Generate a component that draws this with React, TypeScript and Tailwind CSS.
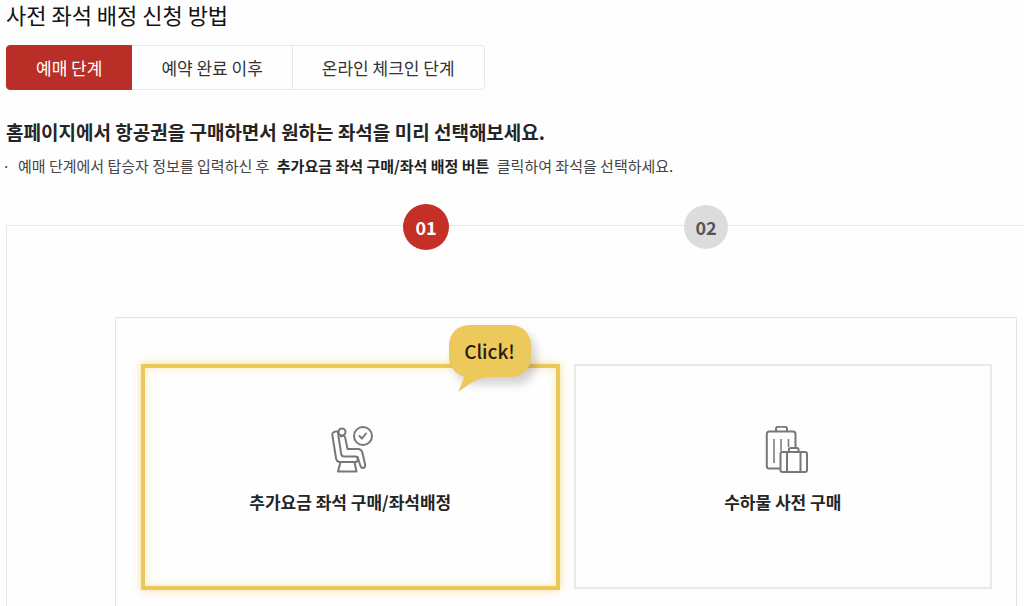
import { useState } from 'react'
import clsx from 'clsx'

const tabs = ['예매 단계', '예약 완료 이후', '온라인 체크인 단계']

function SeatIcon() {
  return (
    <svg width="47" height="50" viewBox="-3 0 47 50" fill="none" stroke="#777" strokeWidth="2" strokeLinecap="round" strokeLinejoin="round" aria-hidden="true">
      <circle cx="12" cy="6" r="3.5" />
      <path d="M8.5 5.500H6C3 5.500 2 7.500 2.400 9.500L6 32C6.500 35 8 36 10 36H25.500C28.500 36 28.500 30.500 25.500 30.500H14C12.500 30.500 11.500 29.500 11.200 28L8 7" />
      <path d="M11 10.500C13 9 15 10 15.300 12L17.500 23H28C30.500 23 31.500 24 32.200 26L35 38C36 42 32 43.500 30.500 40L27.500 31" />
      <path d="M10.500 36L8 45.500H26.500L24.500 36" />
      <circle cx="33" cy="10" r="9" />
      <path d="M29.500 10L32 12.500L36 7.500" />
    </svg>
  )
}

function LuggageIcon() {
  return (
    <svg width="50" height="50" viewBox="-7 1 50 50" fill="none" stroke="#777" strokeWidth="2" strokeLinejoin="round" aria-hidden="true">
      <path d="M11 6.500V4C11 2.500 12 1.800 13 1.800H20C21 1.800 22 2.500 22 4V6.500" />
      <path d="M15 43.500H4C2.500 43.500 1.800 42.500 1.800 41V9C1.800 7.500 2.500 6.500 4 6.500H28C29.500 6.500 30.500 7.500 30.500 9V23" />
      <path d="M9 14V38M16 14V26M23.500 14V22" strokeWidth="1.500" />
      <path d="M24 26.500V24.500C24 23.500 24.500 23 25.500 23H32C33 23 33.500 23.500 33.500 24.500V26.500" />
      <rect x="15.500" y="27" width="26.500" height="20" rx="2" />
      <path d="M22 27V47M35.500 27V47" />
    </svg>
  )
}

function ClickBubble() {
  return (
    <div className="absolute -top-[43px] right-[25px] flex h-13 w-[82px] items-center justify-center rounded-[20px] bg-[#edc85a] text-[19px] font-medium text-[#251b12] shadow-[5px_7px_10px_#0000002e]">
      <svg className="absolute top-12 left-2" width="36" height="20" viewBox="0 0 36 20" aria-hidden="true">
        <path d="M9 0L1 19L14 10Q22 5 32 4V0Z" fill="#edc85a" />
      </svg>
      <span>Click!</span>
    </div>
  )
}

export default function App() {
  const [activeTab, setActiveTab] = useState(0)
  const [step, setStep] = useState(0)

  return (
    <main className="flex min-h-screen flex-col overflow-hidden bg-[#fefefe] pl-1.5 font-['Noto_Sans_CJK_KR','Noto_Sans',sans-serif] text-[#252525]">
      <h1 className="text-[22px] leading-7 text-[#111]">사전 좌석 배정 신청 방법</h1>

      {/* Tabs */}
      <div role="tablist" className="mt-[17px] flex h-[45px]">
        {tabs.map((tab, i) => (
          <button
            key={tab}
            type="button"
            role="tab"
            aria-selected={activeTab === i}
            onClick={() => setActiveTab(i)}
            className={clsx(
              '-ml-px border px-[29px] text-[17px] whitespace-nowrap first:ml-0 first:rounded-l last:rounded-r',
              activeTab === i ? 'z-10 border-[#b92f27] bg-[#b92f27] text-white' : 'border-[#e8e8e8] text-[#333]'
            )}
          >
            {tab}
          </button>
        ))}
      </div>

      <h2 className="mt-7 text-[19px] leading-7 font-bold">
        홈페이지에서 항공권을 구매하면서 원하는 좌석을 미리 선택해보세요.
      </h2>
      <ul className="mt-2 text-[15px] leading-6 text-[#444]">
        <li className="flex">
          <span className="w-3 -indent-1">·</span>
          <p>
            예매 단계에서 탑승자 정보를 입력하신 후{' '}
            <strong className="mx-1 font-bold text-[#222]">추가요금 좌석 구매/좌석 배정 버튼</strong>{' '}
            클릭하여 좌석을 선택하세요.
          </p>
        </li>
      </ul>

      {/* Step panel */}
      <section className="mt-[47px] flex grow flex-col border-t border-l border-[#e8e8e8]">
        <div className="-mt-[22px] flex items-center gap-[235px] pl-[396px]">
          {['01', '02'].map((label, i) => (
            <button
              key={label}
              type="button"
              onClick={() => setStep(i)}
              className={clsx(
                'shrink-0 rounded-full text-lg font-bold',
                step === i ? 'size-[46px] bg-[#c43026] text-white' : 'size-11 bg-[#dcdcdc] text-[#555]'
              )}
            >
              {label}
            </button>
          ))}
        </div>

        <div className="mt-[67px] mr-[7px] ml-[108px] grid grow grid-cols-2 items-start gap-3.5 border border-b-0 border-[#e4e4e4] pt-[46px] pr-6 pl-[25px]">
          <button
            type="button"
            className="relative flex h-[226px] flex-col items-center border-4 border-[#ecc85b] pt-[58px] shadow-[0_0_9px_#f5de9a,inset_0_0_8px_#f8e9bc]"
          >
            <ClickBubble />
            <SeatIcon />
            <span className="mt-3.5 text-[17px] leading-6 font-bold">추가요금 좌석 구매/좌석배정</span>
          </button>
          <button
            type="button"
            className="flex h-[225px] flex-col items-center border-2 border-[#e9e9e9] pt-[60px]"
          >
            <LuggageIcon />
            <span className="mt-3.5 text-[17px] leading-6 font-bold">수하물 사전 구매</span>
          </button>
        </div>
      </section>
    </main>
  )
}
